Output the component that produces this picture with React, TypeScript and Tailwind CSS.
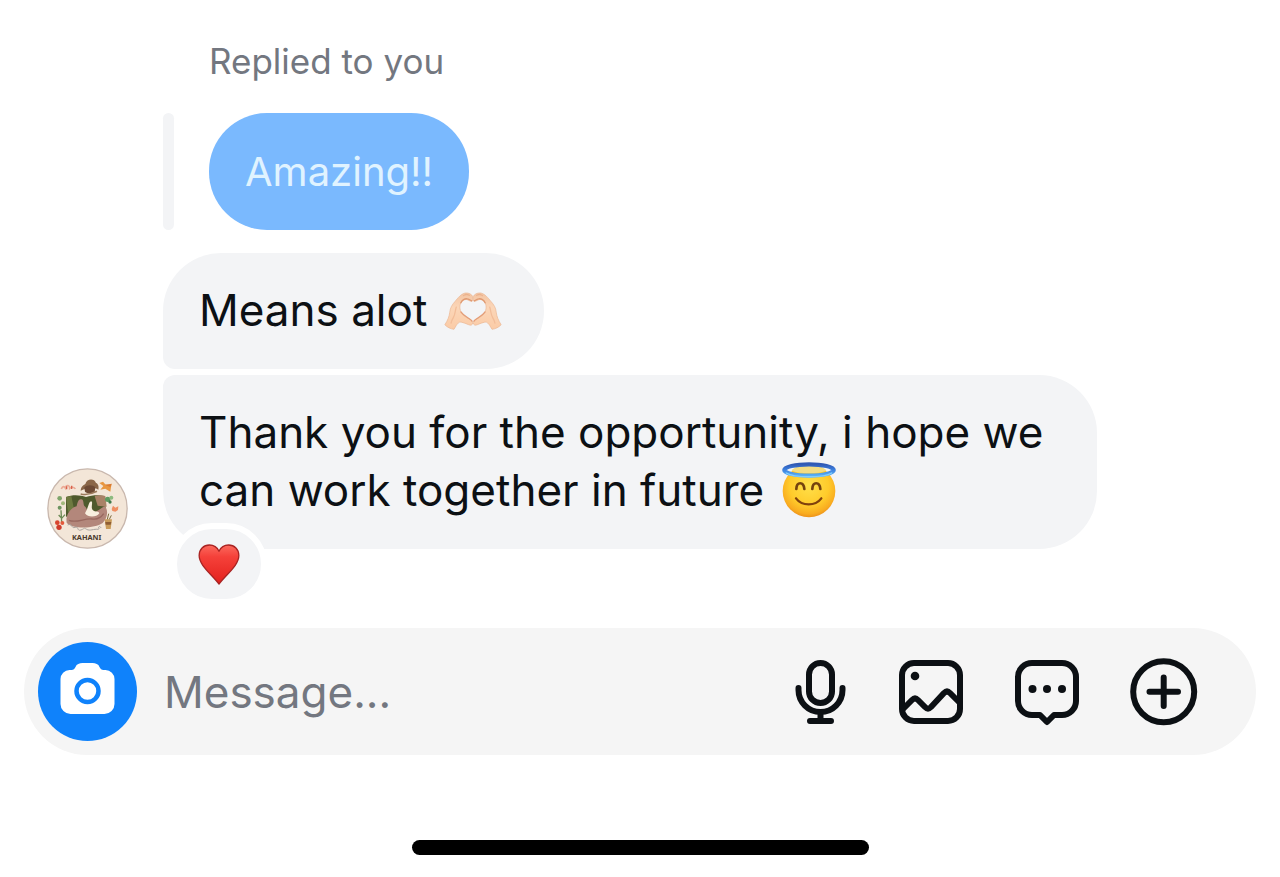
import type { ReactNode } from 'react'

function HeartHands() {
  return (
    <svg viewBox="42 44 176 116" className="ml-1 inline-block w-[58px] h-[38px] align-[-4px]" role="img" aria-label="heart hands">
      <defs>
        <linearGradient id="skin" x1="0" y1="0" x2="0" y2="1">
          <stop offset="0" stopColor="#f3c4a2" />
          <stop offset="0.4" stopColor="#fbd6b8" />
          <stop offset="1" stopColor="#fbcba6" />
        </linearGradient>
      </defs>
      {[false, true].map((flip) => (
        <g key={String(flip)} transform={flip ? 'translate(260 0) scale(-1 1)' : undefined}>
          <path
            d="M44 144c9-14 13-24 15-38 1-14 8-24 16-33 9-11 19-24 32-26 10-1 20 4 22 11 1 6 1 13-3 14-6 1-9-4-16-5-13-1-20 12-20 23 0 15 9 25 20 31 8 4 18 9 19 16 1 8-6 10-12 7-8-4-16-6-23-8-7-2-12 6-15 10l-7 12c-9-1-21-6-28-14z"
            fill="url(#skin)"
            stroke="#eab592"
            strokeWidth="2"
          />
          <path d="M93 77c3-8 12-14 20-12 6 1 9 4 13 6" fill="none" stroke="#e09a72" strokeWidth="4" strokeLinecap="round" />
          <path d="M93 105c6 9 16 14 23 19 4 3 9 5 11 9" fill="none" stroke="#e39d78" strokeWidth="4" strokeLinecap="round" />
          <path d="M79 90c-4 12-3 22-9 32-3 5-6 11-7 17" fill="none" stroke="#f2bd99" strokeWidth="4" strokeLinecap="round" />
          <path d="M101 55c5-4 12-4 18-1" fill="none" stroke="#e8aa84" strokeWidth="3" strokeLinecap="round" />
        </g>
      ))}
    </svg>
  )
}

function Halo() {
  return (
    <svg viewBox="47 36 166 168" className="ml-1 inline-block w-14 h-14 align-[-12px]" role="img" aria-label="smiling face with halo">
      <defs>
        <radialGradient id="face" cx="0.5" cy="0.4" r="0.62">
          <stop offset="0" stopColor="#ffe04a" />
          <stop offset="0.6" stopColor="#ffcb2b" />
          <stop offset="0.86" stopColor="#f9ac20" />
          <stop offset="1" stopColor="#e98a18" />
        </radialGradient>
        <linearGradient id="ring" x1="0" y1="0" x2="0" y2="1">
          <stop offset="0" stopColor="#3059b4" />
          <stop offset="0.45" stopColor="#3b7ddd" />
          <stop offset="1" stopColor="#58b0f5" />
        </linearGradient>
      </defs>
      <circle cx="130" cy="123" r="79" fill="url(#face)" />
      <path d="M78 62c14-24 90-24 104 0-24 10-80 10-104 0z" fill="#f3dc83" />
      <ellipse cx="130" cy="60" rx="74" ry="17" fill="none" stroke="url(#ring)" strokeWidth="13" />
      <path d="M62 69c22 15 114 15 136 0" fill="none" stroke="#83cdfd" strokeWidth="4" strokeLinecap="round" />
      <path d="M92 117c1-23 22-23 24 0M140 117c1-23 22-23 24 0" fill="none" stroke="#75430e" strokeWidth="8" strokeLinecap="round" />
      <path d="M91 145c18 24 58 24 76 0" fill="none" stroke="#80410d" strokeWidth="7" strokeLinecap="round" />
    </svg>
  )
}

function Heart() {
  return (
    <svg viewBox="116 99 126 124" className="w-[42px] h-[41px]" role="img" aria-label="red heart">
      <defs>
        <linearGradient id="heart" x1="0" y1="0" x2="0" y2="1">
          <stop offset="0" stopColor="#fb6a5e" />
          <stop offset="0.3" stopColor="#f5413a" />
          <stop offset="1" stopColor="#e3201c" />
        </linearGradient>
      </defs>
      <path
        d="M179 121c6-13 17-19 29-19 18 0 31 14 31 32 0 29-35 54-60 86-25-32-60-57-60-86 0-18 13-32 31-32 12 0 23 6 29 19z"
        fill="url(#heart)"
        stroke="#a92322"
        strokeWidth="4"
        strokeLinejoin="round"
      />
    </svg>
  )
}

function Avatar() {
  return (
    <svg viewBox="20 24 243 243" className="w-[81px] h-[81px] shrink-0" role="img" aria-label="Kahani">
      <circle cx="141.500" cy="145.500" r="119" fill="#f3e6d8" stroke="#c9b8ae" strokeWidth="4" />
      {/* hat and face */}
      <path d="M121 92c1-12 8-17 14-20 4-16 27-18 32-3 7 2 9 12 7 20-15-8-35-5-53 3z" fill="#8a6648" />
      <path d="M132 82c8-8 26-8 33 0l-2 14c-9 5-22 5-29-1z" fill="#6d4a35" />
      <path d="M121 102c16 4 35-1 49-8" stroke="#9b7a5c" strokeWidth="5" fill="none" />
      {/* book */}
      <path d="M77 111c22-8 44-5 60 0 17-5 36-7 55-3l5 44-120 18z" fill="#4f5a2d" />
      <path d="M163 108c12-3 22-2 32 0l4 32-27-3z" fill="#a98267" />
      <path d="M77 111l6 45 18-8-8-40z" fill="#6e7a40" />
      {/* figure */}
      <path d="M79 188c-4-24 12-45 30-49 2-12 6-23 14-21 8 1 5 13 9 20 7 5 9 14 12 20 15 5 34-10 48-19 14 9 9 38-5 50-25 17-90 19-108-1z" fill="#b3877b" />
      <path d="M137 154c7-12 8-28 15-30 8 1-2 18 5 26 8 8 18 1 20 10-8 12-34 14-43 0z" fill="#f8efdf" />
      <path d="M86 181c23 10 48-8 70-4 16 2 28-7 34-16" stroke="#99685f" strokeWidth="4" fill="none" />
      {/* left plants */}
      <path d="M63 87c4-10 9-8 12-3 3-12 13-8 13 1 5-5 14-4 17 2" stroke="#eba995" strokeWidth="5" fill="none" />
      <path d="M79 79v9M94 77v10" stroke="#d9624b" strokeWidth="4" />
      <circle cx="58" cy="115" r="7" fill="#7fa56b" />
      <circle cx="68" cy="130" r="6" fill="#a3ba7d" />
      <circle cx="58" cy="143" r="6" fill="#6d9460" />
      <path d="M62 151l2 35M55 165l9 10 10-11" stroke="#6d8a55" strokeWidth="4" fill="none" />
      <circle cx="51" cy="188" r="7" fill="#d8442e" />
      <circle cx="66" cy="189" r="6" fill="#e35a3c" />
      <circle cx="56" cy="202" r="8" fill="#cf3a2a" />
      {/* right items */}
      <path d="M177 69l12 9-9 11 15-3 15 9 3-20-17-1-8-9z" fill="#e8963f" />
      <path d="M193 74l22-3-5 10z" fill="#d97a30" />
      <circle cx="202" cy="118" r="8" fill="#5f9a60" />
      <circle cx="213" cy="113" r="6" fill="#8dbb80" />
      <circle cx="209" cy="126" r="5" fill="#3f7a4b" />
      <path d="M214 147l4-10 7 6 9-4-1 11-8 5-9-2z" fill="#ee8e62" />
      <path d="M193 178h22l-4 29h-14z" fill="#c99b5a" />
      <path d="M195 186h18l-2 8h-15z" fill="#8e5d33" />
      <path d="M201 178l4-17M207 178l6-12" stroke="#7c6a3b" strokeWidth="3" />
      {/* script under the figure */}
      <path d="M82 195c14-8 10 12 22 7s5 13 18 8 7-8 17-2 20-2 36 0M177 207c-6-6 2-12 5-3" stroke="#a9a49f" strokeWidth="3" fill="none" />
      <text x="139" y="241" textAnchor="middle" fontSize="22" fontWeight="700" fill="#4a3a2c" fontFamily="Noto Sans, sans-serif">
        KAHANI
      </text>
    </svg>
  )
}

const ICON = 'block h-[68px] fill-none stroke-[#0c1014] stroke-6'

function MicIcon() {
  return (
    <svg viewBox="0 0 60 68" className={`${ICON} w-[60px]`} strokeLinecap="round">
      <rect x="19" y="5" width="23" height="40" rx="11.500" />
      <path d="M8.500 30v2a22 22 0 0 0 44 0v-2M30.500 54v9M20 63h21" />
    </svg>
  )
}

function PhotoIcon() {
  return (
    <svg viewBox="0 0 68 68" className={`${ICON} w-[68px]`} strokeLinejoin="round">
      <rect x="4" y="5" width="58" height="58" rx="12" />
      <path d="M4 52l10-10q3-3 6 0l7 7q3 3 6 0l13-14q3-3 6 0l11 11" />
      <circle cx="17" cy="18" r="4.300" fill="#0c1014" stroke="none" />
    </svg>
  )
}

function ChatIcon() {
  return (
    <svg viewBox="0 0 68 68" className={`${ICON} w-[68px]`} strokeLinejoin="round">
      <path d="M18 5h30a14 14 0 0 1 14 14v24a14 14 0 0 1-14 14h-8l-7 7-7-7h-8a14 14 0 0 1-14-14V19A14 14 0 0 1 18 5z" />
      <g fill="#0c1014" stroke="none">
        <circle cx="18.500" cy="31" r="4" />
        <circle cx="33" cy="31" r="4" />
        <circle cx="48" cy="31" r="4" />
      </g>
    </svg>
  )
}

function PlusIcon() {
  return (
    <svg viewBox="0 0 68 68" className={`${ICON} w-[68px]`} strokeLinecap="round">
      <circle cx="33.700" cy="33.700" r="30.500" />
      <path d="M33.700 19.500v28.500M19.500 33.700h28.500" />
    </svg>
  )
}

function CameraIcon() {
  return (
    <svg viewBox="0 0 99 99" className="w-[99px] h-[99px]">
      <path
        d="M31.500 28h2c2 0 3-1 4-3 1-3 4-4 7-4h10c3 0 6 1 7 4 1 2 2 3 4 3h2a9 9 0 0 1 9 9v25a10 10 0 0 1-10 10h-34a10 10 0 0 1-10-10V37a9 9 0 0 1 9-9z"
        fill="#fff"
      />
      <circle cx="49.500" cy="49" r="11" fill="none" stroke="#0f82fb" strokeWidth="4.500" />
    </svg>
  )
}

const ACTIONS: { label: string; icon: ReactNode }[] = [
  { label: 'Record voice message', icon: <MicIcon /> },
  { label: 'Choose photo', icon: <PhotoIcon /> },
  { label: 'Quick replies', icon: <ChatIcon /> },
  { label: 'More', icon: <PlusIcon /> },
]

export default function App() {
  return (
    <div className="min-h-screen bg-white text-[#0c1014] font-['Inter',sans-serif] flex flex-col">
      <main className="flex items-end gap-[35px] pl-[47px] pr-6 pt-8">
        <Avatar />

        <div className="flex flex-col items-start min-w-0">
          <p className="pl-[46px] text-[35px] leading-[58px] text-[#737780]">Replied to you</p>

          {/* Quoted message */}
          <div className="flex gap-[35px] mt-[23px]">
            <div className="w-[11px] rounded-full bg-[#f3f4f6]" />
            <p className="rounded-[58px] bg-[#7ab9fe] text-[#e0f3ff] px-9 pt-[30px] pb-[29px] text-[40px] leading-[58px]">Amazing!!</p>
          </div>

          <p className="mt-[23px] rounded-[58px] rounded-bl-xl bg-[#f3f4f6] pl-9 pr-[42px] pt-7 pb-[30px] text-[44px] leading-[58px]">
            Means alot <HeartHands />
          </p>

          <div className="relative mt-1.5 max-w-[934px]">
            <p className="rounded-[58px] rounded-tl-xl bg-[#f3f4f6] px-9 pt-7 pb-[30px] text-[44px] leading-[58px]">
              Thank you for the opportunity, i hope we can work together in future <Halo />
            </p>
            <button
              type="button"
              aria-label="1 reaction"
              className="absolute left-2 top-full -mt-[26px] flex items-center justify-center w-24 h-[82px] rounded-full border-6 border-white bg-[#f3f4f6]"
            >
              <Heart />
            </button>
          </div>
        </div>
      </main>

      {/* Composer */}
      <form className="mx-6 mt-[79px] flex items-center h-[127px] rounded-full bg-[#f5f5f5] pl-3.5 pr-[58px]">
        <button type="button" aria-label="Open camera" className="shrink-0 rounded-full bg-[#0f82fb]">
          <CameraIcon />
        </button>
        <input
          type="text"
          aria-label="Message"
          placeholder="Message..."
          className="flex-1 min-w-0 ml-[27px] bg-transparent outline-none text-[44px] leading-[58px] placeholder:text-[#737780]"
        />
        <div className="flex gap-12">
          {ACTIONS.map((a) => (
            <button key={a.label} type="button" aria-label={a.label}>
              {a.icon}
            </button>
          ))}
        </div>
      </form>

      {/* Home indicator */}
      <div className="mx-auto mt-[85px] w-[457px] h-[15px] rounded-full bg-black" />
    </div>
  )
}
